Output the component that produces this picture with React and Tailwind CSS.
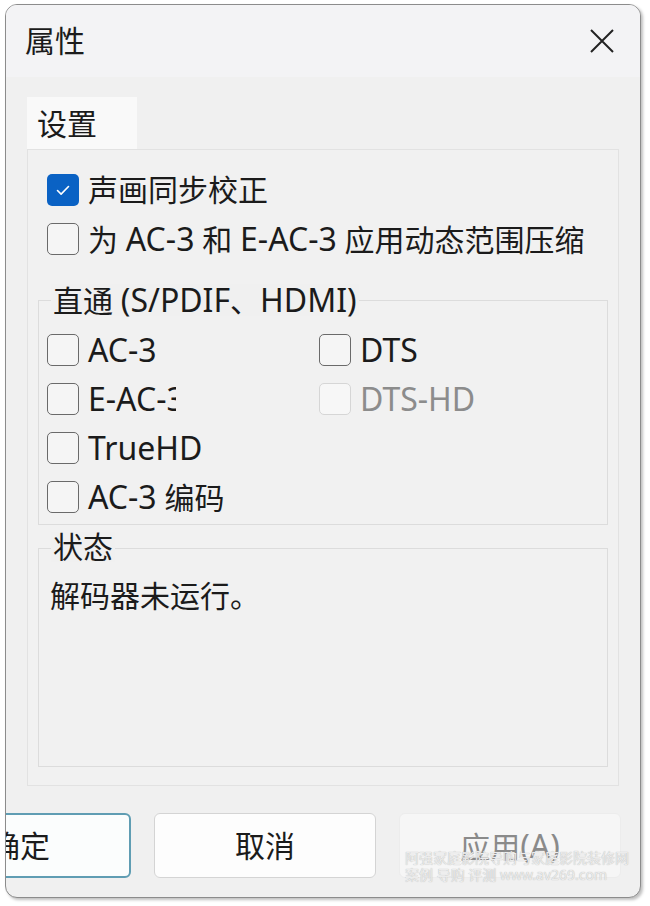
import { useState } from "react";

// Latin runs are set a bit larger, like YaHei's wide Latin glyphs
const L = ({ children }) => <span className="text-[32px]">{children}</span>;

const Check = ({ checked, disabled }) => {
  if (checked) {
    return (
      <span className="flex items-center justify-center w-[32px] h-[32px] rounded-[5px] bg-[#0a62c4] shrink-0">
        <svg width="18" height="18" viewBox="0 0 18 18" fill="none">
          <path d="M3.5 9.5l3.6 3.6 7.4-7.6" stroke="#fff" strokeWidth="1.6" strokeLinecap="round" strokeLinejoin="round" />
        </svg>
      </span>
    );
  }
  return (
    <span
      className={
        disabled
          ? "block w-[32px] h-[32px] rounded-[5px] border-[1.5px] border-[#d6d6d6] bg-[#f7f7f7] shrink-0"
          : "block w-[32px] h-[32px] rounded-[5px] border-[1.5px] border-[#6a6a6a] bg-[#f5f5f5] shrink-0"
      }
    />
  );
};

const Option = ({ label, checked, disabled, clip }) => (
  <div className="flex items-center h-[49px] gap-[9px]">
    <Check checked={checked} disabled={disabled} />
    <span
      className={
        (disabled ? "text-[#8c8c8c] " : "text-[#1b1b1b] ") +
        (clip ? "w-[88px] overflow-hidden whitespace-nowrap " : "whitespace-nowrap ") +
        "leading-none"
      }
    >
      {label}
    </span>
  </div>
);

const GroupBox = ({ title, children, className }) => (
  <div className={"relative border border-[#dcdcdc] " + className}>
    <span className="absolute left-[12px] -top-[17px] px-[2px] bg-[#f0f0f0] leading-none text-[#1b1b1b] whitespace-nowrap">
      {title}
    </span>
    {children}
  </div>
);

export default function App() {
  const [sync] = useState(true);

  return (
    <div
      className="w-[650px] h-[906px] bg-white pl-[5px] pt-[4px] overflow-hidden text-[30px]"
      style={{ fontFamily: '"Noto Sans", "Noto Sans CJK SC", sans-serif' }}
    >
      <div className="relative w-[636px] h-[894px] rounded-[12px] border border-[#8c8c8c] bg-[#f0f0f0] overflow-hidden shadow-[2px_2px_3px_rgba(0,0,0,0.25)] flex flex-col">
        {/* title bar */}
        <div className="flex items-center justify-between h-[72px] pl-[19px] pr-[25px] bg-[#f3f3f5] shrink-0">
          <span className="leading-none text-[#1b1b1b]">属性</span>
          <svg width="26" height="26" viewBox="0 0 26 26" fill="none">
            <path d="M2 2l22 22M24 2L2 24" stroke="#222" strokeWidth="2" />
          </svg>
        </div>

        {/* tab header */}
        <div className="pl-[21px] pt-[20px] shrink-0">
          <div className="w-[110px] h-[53px] bg-[#f9f9f9] flex items-center pl-[10px]">
            <span className="leading-none text-[#1b1b1b]">设置</span>
          </div>
        </div>

        {/* tab panel */}
        <div className="mx-[21px] -mt-px h-[637px] border border-[#e2e2e2] bg-[#f1f1f1] px-[10px] flex flex-col shrink-0">
          <div className="pl-[9px] pt-[15px]">
            <Option label="声画同步校正" checked={sync} />
            <Option
              label={
                <>
                  为 <L>AC-3</L> 和 <L>E-AC-3</L> 应用动态范围压缩
                </>
              }
            />
          </div>

          <GroupBox
            title={
              <>
                直通 <L>(S/PDIF</L>、<L>HDMI)</L>
              </>
            }
            className="mt-[37px] h-[225px] pl-[8px] pt-[24px]"
          >
            <div className="grid grid-cols-[272px_1fr]">
              <Option label={<L>AC-3</L>} />
              <Option label={<L>DTS</L>} />
              <Option label={<L>E-AC-3</L>} clip />
              <Option label={<L>DTS-HD</L>} disabled />
              <Option label={<L>TrueHD</L>} />
              <div />
              <Option
                label={
                  <>
                    <L>AC-3</L> 编码
                  </>
                }
              />
            </div>
          </GroupBox>

          <GroupBox title="状态" className="mt-[23px] h-[219px] pl-[11px] pt-[24px]">
            <span className="leading-none text-[#1b1b1b]">解码器未运行。</span>
          </GroupBox>
        </div>

        {/* buttons */}
        <div className="flex gap-[23px] ml-[-97px] mt-[27px] shrink-0">
          <button className="w-[222px] h-[65px] rounded-[6px] border-2 border-[#5f9db3] bg-[#fbfdfd] text-[#1b1b1b] leading-none">
            确定
          </button>
          <button className="w-[222px] h-[65px] rounded-[6px] border border-[#d4d4d4] bg-[#fdfdfd] text-[#1b1b1b] leading-none">
            取消
          </button>
          <button className="w-[222px] h-[65px] rounded-[6px] border border-[#ececec] bg-[#f6f6f6] text-[#8a8a8a] leading-none">
            应用<L>(A)</L>
          </button>
        </div>

        {/* watermark */}
        <div className="absolute left-[399px] top-[844px] text-[14px] leading-[17px] text-[#ececec] whitespace-nowrap [text-shadow:0_0_1px_#a8a8a8]">
          <div>阿强家庭影院导购与家庭影院装修网</div>
          <div>案例 导购 评测 www.av269.com</div>
        </div>
      </div>
    </div>
  );
}
